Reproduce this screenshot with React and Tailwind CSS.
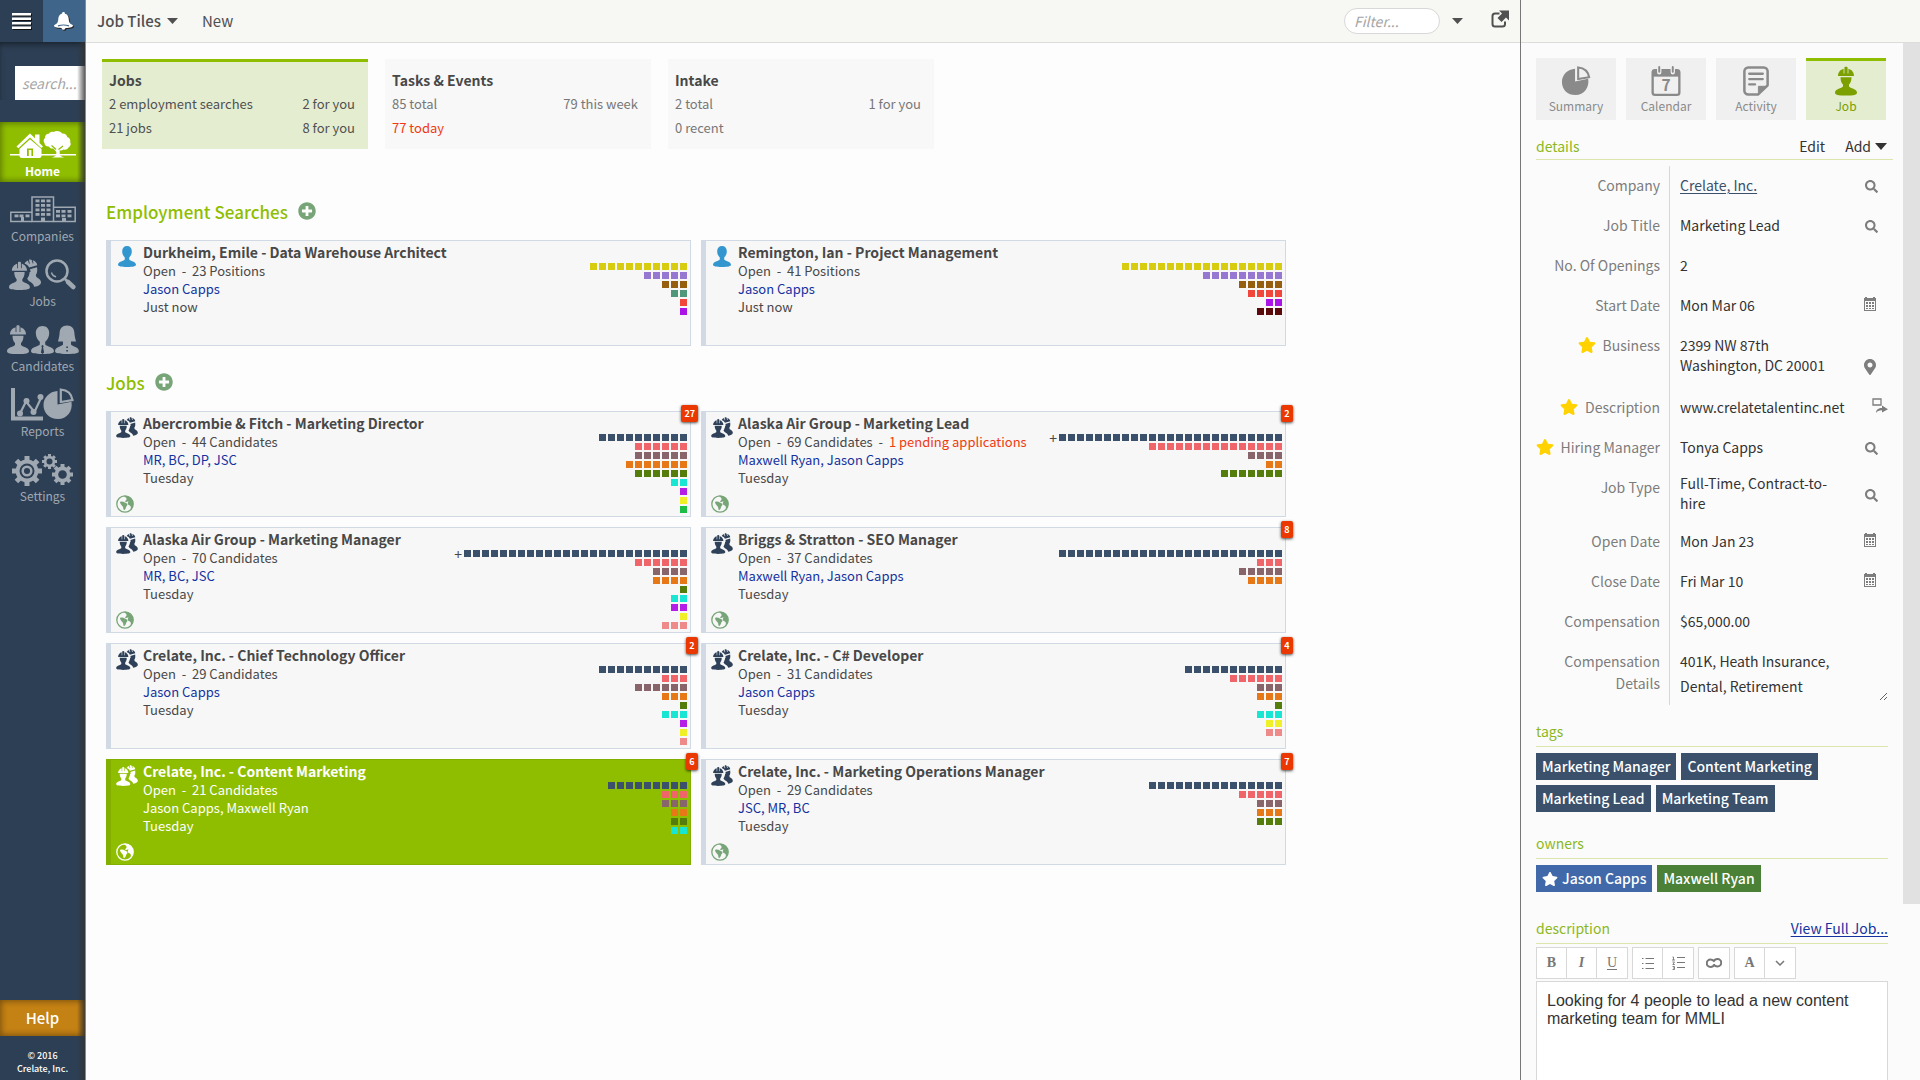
import { useState } from 'react';
import { FaMapMarkerAlt, FaPlusCircle, FaSearch, FaStar } from 'react-icons/fa';

// Pipeline stage colors
const NAVY = 'bg-[#3a506b]';
const CORAL = 'bg-[#f0656a]';
const MAUVE = 'bg-[#87656a]';
const ORANGE = 'bg-[#e67817]';
const OLIVE = 'bg-[#547d0b]';
const CYAN = 'bg-[#19e6d2]';
const PURPLE = 'bg-[#b41ee6]';
const YELLOW = 'bg-[#f0f028]';
const GREEN = 'bg-[#1ebe46]';
const PINK = 'bg-[#ee8a8a]';

const searches = [
  {
    title: 'Durkheim, Emile - Data Warehouse Architect',
    count: '23 Positions',
    owners: 'Jason Capps',
    updated: 'Just now',
    stages: [
      ['bg-[#d8cc10]', 11],
      ['bg-[#9678d2]', 5],
      ['bg-[#965f0f]', 3],
      ['bg-[#509678]', 2],
      ['bg-[#f0463c]', 1],
      ['bg-[#aa14e6]', 1],
    ],
  },
  {
    title: 'Remington, Ian - Project Management',
    count: '41 Positions',
    owners: 'Jason Capps',
    updated: 'Just now',
    stages: [
      ['bg-[#d8cc10]', 18],
      ['bg-[#9678d2]', 9],
      ['bg-[#965f0f]', 5],
      ['bg-[#f0463c]', 4],
      ['bg-[#aa14e6]', 2],
      ['bg-[#5a0a0a]', 3],
    ],
  },
];

const jobs = [
  {
    title: 'Abercrombie & Fitch - Marketing Director',
    count: '44 Candidates',
    owners: 'MR, BC, DP, JSC',
    updated: 'Tuesday',
    badge: 27,
    published: true,
    stages: [[NAVY, 10], [CORAL, 6], [MAUVE, 6], [ORANGE, 7], [OLIVE, 6], [CYAN, 2], [PURPLE, 1], [YELLOW, 1], [GREEN, 1]],
  },
  {
    title: 'Alaska Air Group - Marketing Lead',
    count: '69 Candidates',
    pending: '1 pending applications',
    owners: 'Maxwell Ryan, Jason Capps',
    updated: 'Tuesday',
    badge: 2,
    published: true,
    more: true,
    stages: [[NAVY, 25], [CORAL, 15], [MAUVE, 4], [ORANGE, 2], [OLIVE, 7]],
  },
  {
    title: 'Alaska Air Group - Marketing Manager',
    count: '70 Candidates',
    owners: 'MR, BC, JSC',
    updated: 'Tuesday',
    published: true,
    more: true,
    stages: [[NAVY, 25], [CORAL, 6], [MAUVE, 4], [ORANGE, 4], [OLIVE, 1], [CYAN, 2], [PURPLE, 2], [YELLOW, 1], [PINK, 3]],
  },
  {
    title: 'Briggs & Stratton - SEO Manager',
    count: '37 Candidates',
    owners: 'Maxwell Ryan, Jason Capps',
    updated: 'Tuesday',
    badge: 8,
    published: true,
    stages: [[NAVY, 25], [CORAL, 3], [MAUVE, 5], [ORANGE, 4]],
  },
  {
    title: 'Crelate, Inc. - Chief Technology Officer',
    count: '29 Candidates',
    owners: 'Jason Capps',
    updated: 'Tuesday',
    badge: 2,
    stages: [[NAVY, 10], [CORAL, 3], [MAUVE, 6], [ORANGE, 3], [OLIVE, 1], [CYAN, 3], [PURPLE, 1], [YELLOW, 1], [PINK, 1]],
  },
  {
    title: 'Crelate, Inc. - C# Developer',
    count: '31 Candidates',
    owners: 'Jason Capps',
    updated: 'Tuesday',
    badge: 4,
    stages: [[NAVY, 11], [CORAL, 6], [MAUVE, 3], [ORANGE, 3], [OLIVE, 1], [CYAN, 3], [YELLOW, 2], [PINK, 2]],
  },
  {
    title: 'Crelate, Inc. - Content Marketing',
    count: '21 Candidates',
    owners: 'Jason Capps, Maxwell Ryan',
    updated: 'Tuesday',
    badge: 6,
    published: true,
    stages: [[NAVY, 9], [CORAL, 3], [MAUVE, 3], [ORANGE, 2], [OLIVE, 2], [CYAN, 2]],
  },
  {
    title: 'Crelate, Inc. - Marketing Operations Manager',
    count: '29 Candidates',
    owners: 'JSC, MR, BC',
    updated: 'Tuesday',
    badge: 7,
    published: true,
    stages: [[NAVY, 15], [CORAL, 5], [MAUVE, 3], [ORANGE, 3], [OLIVE, 3]],
  },
];

const summaries = [
  { title: 'Jobs', rows: [['2 employment searches', '2 for you'], ['21 jobs', '8 for you']] },
  { title: 'Tasks & Events', rows: [['85 total', '79 this week'], ['77 today', '']] },
  { title: 'Intake', rows: [['2 total', '1 for you'], ['0 recent', '']] },
];

/* ---------- Icons ---------- */

const HELMET = 'M3 9.5C3 5.5 5.5 3 8.6 2.2V7h.8V1.4C9.4.6 10 .3 11 .3s1.6.3 1.6 1.1V7h.8V2.2C16.5 3 19 5.5 19 9.5Z';
const BODY =
  'M5.5 10.800h11c0 4-1.300 6-2.500 7.200v2c1 1.800 8 2.200 8 6.200 0 2-3 2.800-11 2.800s-11-.8-11-2.800c0-4 7-4.400 8-6.200v-2c-1.200-1.200-2.500-3.200-2.500-7.200Z';

const Worker = ({ className }) => (
  <svg viewBox="0 0 22 29" fill="currentColor" className={className}>
    <path d={HELMET} />
    <path d={BODY} />
  </svg>
);

const Workers = ({ className }) => (
  <svg viewBox="0 0 32 31" fill="currentColor" className={className}>
    <path d="M15.5 4.500c.8-1.500 2-2.600 3.500-3.100l1 3.300.8-.2-.9-3.700c1-.6 2.200-.4 2.800.3l1 3.500.8-.3-.8-3C26.500 2 28 4 28.200 6.300L20.300 8.600C19.200 6.600 17.500 5.200 15.500 4.500Z" />
    <path d="M21 10.300 28 8.300c.6 3.200.2 6-1.200 7.700l.6 2c1.600 1.200 4.600 2.300 4.600 5.400 0 1.800-2.200 3.600-6.800 4.400-.6-3-3-4.600-5.400-5.800l-1.600-2.200c1.600-2.400 2.300-4.400 2.400-6.800h1Z" />
    <g transform="translate(0 2.500) scale(.95 .98)">
      <path d={HELMET} />
      <path d={BODY} />
    </g>
  </svg>
);

const Person = ({ className }) => (
  <svg viewBox="0 0 18 21" fill="currentColor" className={className}>
    <path d="M9 0c3 0 4.800 2 4.800 5.200 0 2.800-1.200 5-2.600 6.300v2C12 15 18 15.500 18 18.800c0 1.500-3 2.200-9 2.200s-9-.7-9-2.200C0 15.500 6 15 6.800 13.500v-2C5.400 10.200 4.200 8 4.200 5.200 4.200 2 6 0 9 0Z" />
  </svg>
);

const Bell = () => (
  <svg viewBox="0 0 19 18" fill="currentColor" className="h-[18px] w-[19px] drop-shadow-[1px_1px_0_#222]">
    <path d="M9.500 0c.9 0 1.400.6 1.400 1.400 2.400.7 3.700 2.600 3.800 5.300.1 3 .8 4.800 3.500 6 .5.300.8.700.8 1.100 0 1.600-4 2.400-9.500 2.400S0 15.400 0 13.800c0-.4.3-.8.8-1.100 2.700-1.200 3.400-3 3.500-6 .1-2.700 1.400-4.600 3.800-5.300C8.100.6 8.600 0 9.500 0Z" />
    <path d="M4 13.800c3.500-1 7.500-1 11 0" fill="none" stroke="#3f658a" strokeWidth="1.200" />
    <circle cx="9.500" cy="15.800" r="2" />
  </svg>
);

const Globe = ({ className }) => (
  <svg viewBox="0 0 18 18" className={className}>
    <circle cx="9" cy="9" r="8.200" fill="none" stroke="currentColor" strokeWidth="1.300" />
    <path
      d="M8 .8c4.500-.6 9 2.700 9.200 7.700.1 2.500-.8 4.700-2.300 6.200-.5-1.200.3-2-.2-3.200-.5-1.200-2-1-2.700-2.200-.5-1-.2-2 .6-2.600-.8-.4-1.700-.2-2.300.4l-1.600-.5C9.400 5.600 11 5 10.500 3.500 10.200 2.600 8.700 2.200 8 .8Z"
      fill="currentColor"
    />
    <path
      d="M4 7c1.600-.8 3.600-.4 4.800.6.8.6 2.300.6 2.600 1.600.3 1.100-1 1.700-1.300 2.800-.3 1.200-.8 2.600-2 3.200-.9-.6-.7-2-1-3-.3-1-1.400-1.500-1.900-2.400C4.800 9 4 8.200 4 7Z"
      fill="currentColor"
    />
  </svg>
);

const HomeIcon = () => (
  <svg viewBox="0 0 66 28" fill="currentColor" className="h-7 w-[66px]">
    <path d="M0 23h66v1.500H0z" />
    <path d="M6.500 15.500 20 2.500l5 4.800V3.500h4.500V12l3.500 3.500-1.800 1.600L20 6.400 8.300 17.200Z" />
    <path d="M20 8.300 9.500 18v6.500c0 1.500.8 2.500 2 2.500h18c1.200 0 2-1 2-2.500V18Z" />
    <path d="M17 17.500h6V25h-6z" fill="#8fbe00" />
    <path d="M18.800 19h2.600v6h-2.600z" />
    <path d="M47 0c2.500 0 4.300 1 5 2.500 3-.3 5 1.300 5.200 3.500 2.500.8 3.600 2.800 3 5 1 2 .5 4.300-1.500 5.300-.8 2-3.200 3-5.200 2.200-1 .9-2.500 1.200-3.800.8v4.200c.5 1.300 2 2.200 4.800 3H41.500c2.800-.8 4.300-1.700 4.800-3v-2.800l-3-3.200c-2 .3-3.800-.5-4.500-2-2.500.2-4.300-1.200-4.300-3.500-1.300-1.500-1-3.800.5-5-.2-2.500 1.500-4.300 3.800-4.200C40 1 42.300.5 43.700 1 44.600.4 45.700 0 47 0Z" />
    <path d="m41.500 14.500 4.500 4M53 15l-4.500 3.500" fill="none" stroke="#8fbe00" strokeWidth="1.200" />
  </svg>
);

const CompaniesIcon = () => {
  const windows = [];
  [25.5, 31, 36.5].forEach((x) => [3.5, 8, 12.5, 17].forEach((y) => windows.push([x, y])));
  [4.5, 9.5, 15.5].forEach((x) => windows.push([x, 18.5]));
  [46, 51.5, 57.5].forEach((x) => [14, 18.5].forEach((y) => windows.push([x, y])));
  return (
    <svg viewBox="0 0 66 28" className="h-7 w-[66px]">
      <g fill="none" stroke="currentColor" strokeWidth="1.500">
        <path d="M22 25.500H.8V16.200H22" />
        <path d="M22 25.500V1h21.500v24.500Z" />
        <path d="M43.500 11.200h21.700v14.300H43.500" />
      </g>
      {windows.map(([x, y]) => (
        <rect key={`${x}-${y}`} x={x} y={y} width="4" height="2.800" fill="currentColor" />
      ))}
      <path d="M11 21h3v4h-3zM31 21.500h4V25h-4zM52 22h4v3.500h-4z" fill="currentColor" />
    </svg>
  );
};

const JobsIcon = () => (
  <div className="flex items-start gap-1">
    <Workers className="h-[31px] w-8" />
    <svg viewBox="0 0 31 31" className="h-[31px] w-[31px]" fill="none" stroke="currentColor">
      <circle cx="12" cy="12" r="10.500" strokeWidth="2.500" />
      <path d="M6.500 13.500c.6 2.300 2.200 3.800 4.600 4.200" strokeWidth="1.500" />
      <path d="m20 20 2.500 2.500" strokeWidth="2.500" />
      <path d="m23 23 5.300 5" strokeWidth="4.500" strokeLinecap="round" />
    </svg>
  </div>
);

const CandidatesIcon = () => (
  <svg viewBox="0 0 72 30" fill="currentColor" className="h-[30px] w-[72px]">
    <path d={HELMET} />
    <path d={BODY} />
    <path d="M35.500 1c4 0 6.700 2.800 6.700 7 0 3.800-1.800 7-4 8.800V19.500c1.500 2 8.800 2.500 8.800 6.500 0 2.200-3.500 3-11.500 3S24 28.200 24 26c0-4 7.300-4.500 8.800-6.500v-2.700c-2.200-1.800-4-5-4-8.800 0-4.200 2.700-7 6.700-7Z" />
    <path d="M60 .5c4.800 0 7 2.800 7.400 7.500.2 3.200.8 5.500 1.600 8.500h-5v3c1.300 2 8 2.500 8 6.500 0 2.200-3.500 3-12 3s-12-.8-12-3c0-4 6.700-4.500 8-6.500v-3h-5c.8-3 1.400-5.300 1.600-8.500C53 3.300 55.200.5 60 .5Z" />
    <path d="m34.300 21 1.200-1 1.200 1-.6 1.500 1 5-1.600 1.500-1.600-1.500 1-5ZM59.300 21.500h1.600v1.600h-1.600zM59.300 25h1.600v1.600h-1.600z" fill="#2d3f54" />
  </svg>
);

const PiePaths = () => (
  <>
    <path d="M15 3v13.500l14-2.800c1.500 9.500-4.500 17.300-13.500 17.300C7 31 1 25 1 17 1 9.500 7 3.500 15 3Z" />
    <path d="M18.300 1.500c6.500.6 10.800 4.600 11.700 10.500l-11.700 2Z" fill="none" stroke="currentColor" strokeWidth="2.200" />
  </>
);

const ReportsIcon = () => (
  <svg viewBox="0 0 63 33" fill="currentColor" className="h-[33px] w-[63px]">
    <path d="M0 0h4v28.500h28V32.500H0z" />
    <path d="m9 25.500 6-12 8.500 10.500 6.500-14" fill="none" stroke="currentColor" strokeWidth="2.200" />
    <circle cx="9" cy="25.500" r="3" />
    <circle cx="15.500" cy="13" r="3" />
    <circle cx="22.500" cy="24" r="3" />
    <circle cx="29.500" cy="9" r="3" />
    <g transform="translate(31.500 0)">
      <PiePaths />
    </g>
  </svg>
);

const Gear = ({ cx, cy, r, tooth, hole }) => (
  <g>
    {[0, 45, 90, 135].map((angle) => (
      <rect
        key={angle}
        x={cx - tooth / 2}
        y={cy - r}
        width={tooth}
        height={r * 2}
        transform={`rotate(${angle} ${cx} ${cy})`}
        fill="currentColor"
      />
    ))}
    <circle cx={cx} cy={cy} r={r * 0.76} fill="currentColor" />
    <circle cx={cx} cy={cy} r={hole} fill="#2d3f54" />
  </g>
);

const SettingsIcon = () => (
  <svg viewBox="0 0 62 32" className="h-8 w-[62px]">
    <Gear cx={15} cy={17} r={15} tooth={5} hole={7.5} />
    <circle cx="15" cy="17" r="4.300" fill="none" stroke="currentColor" strokeWidth="2.500" />
    <Gear cx={37.5} cy={7.5} r={7.5} tooth={3} hole={3} />
    <Gear cx={50.5} cy={20.5} r={10.5} tooth={4} hole={4.3} />
  </svg>
);

const CalendarGrid = () => (
  <svg viewBox="0 0 12 14" className="h-3.5 w-3" fill="currentColor">
    <path d="M0 1h1V0h2v1h6V0h2v1h1v13H0Zm1 3v9h10V4Z" fillRule="evenodd" />
    {[2, 5, 8].map((x) => [5, 8, 11].map((y) => <rect key={`${x}-${y}`} x={x} y={y} width="2" height={y === 11 ? 1 : 2} />))}
  </svg>
);

const ShareIcon = () => (
  <svg viewBox="0 0 16 16" className="size-4" fill="none" stroke="currentColor">
    <path d="M1 1h8v6H1z" strokeWidth="1.300" />
    <path d="M4 15c0-3.500 2.500-5 6-5V7.500l6 3.700-6 3.300v-2.300c-3 0-5 .8-6 2.800Z" fill="currentColor" stroke="none" />
  </svg>
);

/* ---------- Sidebar ---------- */

const navItems = [
  { label: 'Home', Icon: HomeIcon },
  { label: 'Companies', Icon: CompaniesIcon },
  { label: 'Jobs', Icon: JobsIcon },
  { label: 'Candidates', Icon: CandidatesIcon },
  { label: 'Reports', Icon: ReportsIcon },
  { label: 'Settings', Icon: SettingsIcon },
];

const Sidebar = () => (
  <aside className="relative flex w-[85px] shrink-0 flex-col overflow-hidden bg-[#2d3f54]">
    <div className="flex h-[42px] shrink-0 text-white">
      <button className="flex flex-1 items-center justify-center" aria-label="Menu">
        <svg viewBox="0 0 19 16" className="h-4 w-[19px] drop-shadow-[1px_1px_0_#111]" fill="currentColor">
          <path d="M0 0h19v2.500H0zM0 4.500h19V7H0zM0 9h19v2.500H0zM0 13.500h19V16H0z" />
        </svg>
      </button>
      <button className="flex flex-1 items-center justify-center bg-[#3f658a]" aria-label="Notifications">
        <Bell />
      </button>
    </div>
    <div className="pt-6 pl-[15px] shadow-[inset_0_4px_6px_-2px_rgba(0,0,0,0.5)]">
      <input
        type="text"
        placeholder="search..."
        aria-label="Search"
        className="h-[34px] w-full bg-white pl-[7px] text-sm italic outline-none placeholder:text-[#a5a5a5]"
      />
    </div>
    <nav className="mt-[22px] flex flex-col gap-[5px]">
      {navItems.map(({ label, Icon }, index) => (
        <a
          key={label}
          href="#"
          className={
            index === 0
              ? 'flex h-[60px] flex-col items-center bg-[#8fbe00] text-xs font-bold text-white shadow-[inset_0_0_6px_1px_rgba(0,0,0,0.4)]'
              : 'flex h-[60px] flex-col items-center text-xs text-[#a0a8b2]'
          }
        >
          <span className="flex h-[41px] items-center pt-1">
            <Icon />
          </span>
          <span className="leading-4">{label}</span>
        </a>
      ))}
    </nav>
    <div className="mt-auto">
      <button className="h-9 w-full bg-[#c48114] text-[15px] font-medium text-white shadow-[inset_0_0_6px_1px_rgba(0,0,0,0.4)]">
        Help
      </button>
      <p className="pt-[13px] pb-[5px] text-center text-[9px] leading-[13px] font-medium text-white">
        © 2016
        <br />
        Crelate, Inc.
      </p>
    </div>
    <div className="pointer-events-none absolute top-[42px] right-0 bottom-0 w-2 bg-linear-to-r from-transparent to-[#333]/80" />
  </aside>
);

/* ---------- Main area ---------- */

const SummaryTile = ({ title, rows, active }) => (
  <button
    className={
      active
        ? 'flex h-[90px] w-[266px] flex-col justify-start border-t-3 border-[#8fbe00] bg-[#e4edd0] pt-[6px] pr-[13px] pl-[7px] text-left text-[13px] text-[#505050]'
        : 'flex h-[90px] w-[266px] flex-col justify-start border-t-3 border-[#f8f8f8] bg-[#f8f8f8] pt-[6px] pr-[13px] pl-[7px] text-left text-[13px] text-[#777]'
    }
  >
    <span className="text-sm leading-6 font-bold text-[#484848]">{title}</span>
    {rows.map(([left, right]) => (
      <span key={left} className="flex w-full justify-between leading-6">
        <span className={left === '77 today' ? 'text-[#f03a10]' : ''}>{left}</span>
        <span>{right}</span>
      </span>
    ))}
  </button>
);

const JobCard = ({ job, search, selected, onSelect }) => (
  <article
    onClick={onSelect}
    className={
      selected
        ? 'relative flex h-[106px] border border-l-[5px] border-[#83b000] bg-[#8fbe00] text-white'
        : 'relative flex h-[106px] border border-l-[5px] border-[#d1d9e5] bg-[#f7f7f7] text-[#484848]'
    }
  >
    <div className="flex w-8 shrink-0 flex-col justify-between pt-[5px] pb-[3px] pl-[5px]">
      {search ? (
        <Person className="ml-0.5 h-[21px] w-[18px] text-[#3496cf]" />
      ) : (
        <Workers className={selected ? 'h-[21px] w-[22px] text-white' : 'h-[21px] w-[22px] text-[#2f4159]'} />
      )}
      {job.published && <Globe className={selected ? 'size-[18px] text-white' : 'size-[18px] text-[#78a578]'} />}
    </div>
    <div className="min-w-0 flex-1 pt-px text-[13px] leading-[18px]">
      <h3 className={selected ? 'text-sm leading-5 font-bold' : 'text-sm leading-5 font-bold text-[#484848]'}>{job.title}</h3>
      <p>
        Open&nbsp; - &nbsp;{job.count}
        {job.pending && (
          <>
            &nbsp; - &nbsp;<span className="text-[#f03a10]">{job.pending}</span>
          </>
        )}
      </p>
      <p className={selected ? '' : 'text-[#1432a0]'}>{job.owners}</p>
      <p>{job.updated}</p>
    </div>
    <div className="flex flex-col items-end gap-0.5 pt-[22px] pr-[3px]">
      {job.stages.map(([color, count], index) => (
        <div key={color} className="flex h-[7px] items-center gap-0.5">
          {index === 0 && job.more && <span className="text-sm leading-none">+</span>}
          {Array.from({ length: count }, (_, i) => (
            <span key={i} className={`size-[7px] ${color}`} />
          ))}
        </div>
      ))}
    </div>
    {job.badge && (
      <span className="absolute -top-[7px] -right-2 flex h-[17px] min-w-3 items-center justify-center rounded-xs bg-[#eb3700] px-[3px] text-[9px] leading-none font-bold text-white shadow-[0_1px_3px_rgba(0,0,0,0.7)]">
        {job.badge}
      </span>
    )}
  </article>
);

const Section = ({ title, children }) => (
  <section>
    <div className="flex h-[26px] items-center gap-[10px]">
      <h2 className="text-[17px] font-medium text-[#8fbe00]">{title}</h2>
      <button aria-label={`Add to ${title}`} className="mb-[3px]">
        <FaPlusCircle className="size-[18px] text-[#78a578]" />
      </button>
    </div>
    <div className="mt-[15px] grid grid-cols-2 gap-[10px]">{children}</div>
  </section>
);

/* ---------- Detail panel ---------- */

const tabs = [
  {
    label: 'Summary',
    icon: (
      <svg viewBox="0 0 32 32" fill="currentColor" className="size-[30px]">
        <PiePaths />
      </svg>
    ),
  },
  {
    label: 'Calendar',
    icon: (
      <svg viewBox="0 0 30 31" className="size-[30px]">
        <rect x="1.200" y="4.200" width="27.600" height="25.600" rx="2.500" fill="none" stroke="currentColor" strokeWidth="2.400" />
        <path d="M1 4h28v7H1z" fill="currentColor" />
        <path d="M8 1v5.500M22 1v5.500" stroke="#f0f0f0" strokeWidth="4.500" strokeLinecap="round" />
        <path d="M8 1v5M22 1v5" stroke="currentColor" strokeWidth="2" strokeLinecap="round" />
        <text x="15" y="26" textAnchor="middle" fontSize="16" fontWeight="700" fill="currentColor">
          7
        </text>
      </svg>
    ),
  },
  {
    label: 'Activity',
    icon: (
      <svg viewBox="0 0 28 31" className="h-[30px] w-7" fill="none" stroke="currentColor" strokeWidth="2.600">
        <path d="M16 29.500H6A4 4 0 0 1 2 25.500V5.500a4 4 0 0 1 4-4h16a4 4 0 0 1 4 4V20Z" strokeLinejoin="round" />
        <path d="M16.500 29V21H26Z" fill="currentColor" strokeWidth="1" />
        <path d="M7 8h14M7 13.500h14M7 19h6" strokeLinecap="round" strokeWidth="2.400" />
      </svg>
    ),
  },
  { label: 'Job', icon: <Worker className="h-[30px] w-[22px]" /> },
];

const fields = [
  { label: 'Company', value: 'Crelate, Inc.', href: '#', icon: 'search' },
  { label: 'Job Title', value: 'Marketing Lead', icon: 'search' },
  { label: 'No. Of Openings', value: '2' },
  { label: 'Start Date', value: 'Mon Mar 06', icon: 'calendar' },
  { label: 'Business', value: '2399 NW 87th\nWashington, DC 20001', icon: 'pin', starred: true },
  { label: 'Description', value: 'www.crelatetalentinc.net', icon: 'share', starred: true },
  { label: 'Hiring Manager', value: 'Tonya Capps', icon: 'search', starred: true },
  { label: 'Job Type', value: 'Full-Time, Contract-to-hire', icon: 'search' },
  { label: 'Open Date', value: 'Mon Jan 23', icon: 'calendar' },
  { label: 'Close Date', value: 'Fri Mar 10', icon: 'calendar' },
  { label: 'Compensation', value: '$65,000.00' },
];

const rowClass = {
  Business: 'flex h-[62px]',
  'Job Type': 'flex h-[54px]',
};

const iconClass = {
  search: 'flex flex-1 items-center justify-center text-[#7d7d7d]',
  calendar: 'flex flex-1 items-center justify-center pr-1 pb-1 text-[#7d7d7d]',
  pin: 'flex flex-1 items-end justify-center pr-1 pb-[13px] text-[#7d7d7d]',
  share: 'flex flex-1 items-center justify-end pr-[5px] pb-1 text-[#7d7d7d]',
};

const FieldIcon = ({ type }) => {
  if (type === 'search') return <FaSearch className="size-[13px]" />;
  if (type === 'calendar') return <CalendarGrid />;
  if (type === 'pin') return <FaMapMarkerAlt className="size-4" />;
  return <ShareIcon />;
};

const Field = ({ field }) => (
  <div className={rowClass[field.label] || 'flex h-10'}>
    <dt className="flex w-[133px] shrink-0 justify-end gap-[7px] pt-2 pr-[9px] leading-[22px] whitespace-nowrap text-[#7d7d7d]">
      {field.starred && <FaStar className="mt-0.5 size-[18px] shrink-0 text-[#ffd200]" />}
      {field.label}
    </dt>
    <dd className="flex min-w-0 flex-1 border-l border-[#d8d8d8] pl-[10px] text-[#333]">
      <span
        className={
          field.label === 'Job Type'
            ? 'w-[170px] shrink-0 pt-[5px] leading-5 whitespace-pre-line'
            : 'w-[170px] shrink-0 pt-[9px] leading-5 whitespace-pre-line'
        }
      >
        {field.href ? (
          <a href={field.href} className="text-[#3a506b] underline underline-offset-2">
            {field.value}
          </a>
        ) : (
          field.value
        )}
      </span>
      {field.icon && (
        <button aria-label={`${field.label} ${field.icon}`} className={iconClass[field.icon]}>
          <FieldIcon type={field.icon} />
        </button>
      )}
    </dd>
  </div>
);

const toolbarGroups = [
  [
    { name: 'Bold', icon: <b>B</b> },
    { name: 'Italic', icon: <i className="font-bold">I</i> },
    { name: 'Underline', icon: <u className="underline-offset-2">U</u> },
  ],
  [
    {
      name: 'Bullets',
      icon: (
        <svg viewBox="0 0 12 12" className="size-3" fill="none" stroke="currentColor">
          <path d="M0 1.500h1.500M3.500 1.500H12M0 6.500h1.500M3.500 6.500H12M0 11.500h1.500M3.500 11.500H12" />
        </svg>
      ),
    },
    {
      name: 'Numbering',
      icon: (
        <svg viewBox="0 0 13 14" className="h-3.5 w-[13px]" fill="none" stroke="currentColor">
          <path d="M5 1.500h8M5 6.500h8M5 11.500h8" />
          <path d="M.5 1h1v3M0 4h3M.5 6h2L.8 8.500h2M.5 10.500h2v3h-2M1 12h1.500" strokeWidth=".9" />
        </svg>
      ),
    },
  ],
  [
    {
      name: 'Link',
      icon: (
        <svg viewBox="0 0 16 10" className="h-2.5 w-4" fill="none" stroke="currentColor" strokeWidth="2">
          <path d="M8.500 6.500C7.500 8.500 6 9 4.500 9a3.700 3.700 0 0 1 0-7.500c1.800 0 3 .7 4 2.300M7.500 3.500C8.500 1.500 10 1 11.500 1a3.700 3.700 0 0 1 0 7.500c-1.800 0-3-.7-4-2.300" />
        </svg>
      ),
    },
  ],
  [
    { name: 'Font', icon: <b>A</b> },
    {
      name: 'More fonts',
      icon: (
        <svg viewBox="0 0 10 6" className="h-1.5 w-2.5" fill="none" stroke="currentColor" strokeWidth="1.500">
          <path d="m1 1 4 4 4-4" />
        </svg>
      ),
    },
  ],
];

const PanelHeading = ({ children }) => (
  <h2 className="mr-[15px] border-b border-[#dbe6ac] pb-[3px] text-sm leading-6 text-[#8cb81e]">{children}</h2>
);

const DetailPanel = () => {
  const [compensation, setCompensation] = useState('401K, Heath Insurance, Dental, Retirement');
  const [description, setDescription] = useState('Looking for 4 people to lead a new content marketing team for MMLI');

  return (
    <aside className="flex w-[400px] shrink-0 flex-col overflow-hidden border-l border-[#777] bg-[#fbfbfb]">
      <div className="h-[43px] shrink-0 border-b border-[#dcdcdc] bg-[#f7f7f3]" />
      <div className="flex min-h-0 flex-1">
        <div className="flex min-w-0 flex-1 flex-col overflow-hidden pt-[15px] pl-[15px] text-sm">
          <div className="flex gap-[10px]">
            {tabs.map((tab) => (
              <button
                key={tab.label}
                className={
                  tab.label === 'Job'
                    ? 'flex h-[62px] w-20 flex-col items-center border-t-3 border-[#8fbe00] bg-[#e4edd0] pt-[5px] text-xs leading-5 text-[#7ba000]'
                    : 'flex h-[62px] w-20 flex-col items-center bg-[#f0f0f0] pt-2 text-xs leading-5 text-[#8a8a8a]'
                }
              >
                {tab.icon}
                {tab.label}
              </button>
            ))}
          </div>

          <div className="mt-[14px] mr-[10px] flex border-b border-[#dbe6ac] pb-px leading-6">
            <h2 className="flex-1 text-[#8cb81e]">details</h2>
            <button className="mr-5 text-[#333]">Edit</button>
            <button className="mr-[6px] flex items-center gap-1 text-[#333]">
              Add
              <svg viewBox="0 0 12 7" className="h-[7px] w-3" fill="currentColor">
                <path d="M0 0h12L6 7z" />
              </svg>
            </button>
          </div>

          <dl className="mt-[6px] mr-[10px]">
            {fields.map((field) => (
              <Field key={field.label} field={field} />
            ))}
            <div className="flex h-[63px]">
              <dt className="w-[133px] shrink-0 pt-2 pr-[9px] text-right leading-[22px] text-[#7d7d7d]">
                <label htmlFor="compensation-details">Compensation Details</label>
              </dt>
              <dd className="flex flex-1 border-l border-[#d8d8d8] pt-[7px] pr-[5px] pl-[10px]">
                <textarea
                  id="compensation-details"
                  value={compensation}
                  onChange={(e) => setCompensation(e.target.value)}
                  className="h-[52px] w-full overflow-hidden bg-transparent pr-8 leading-[25px] text-[#333] outline-none"
                />
              </dd>
            </div>
          </dl>

          <div className="mt-[14px]">
            <PanelHeading>tags</PanelHeading>
            <div className="mt-[6px] flex flex-wrap gap-[5px] font-medium text-white">
              {['Marketing Manager', 'Content Marketing', 'Marketing Lead', 'Marketing Team'].map((tag) => (
                <span key={tag} className="h-[27px] bg-[#3a506b] px-[6px] leading-[27px]">
                  {tag}
                </span>
              ))}
            </div>
          </div>

          <div className="mt-[19px]">
            <PanelHeading>owners</PanelHeading>
            <div className="mt-[6px] flex gap-[5px] font-medium text-white">
              <span className="flex h-[27px] items-center gap-1 bg-[#4169aa] px-[6px] leading-[27px]">
                <FaStar className="size-4" />
                Jason Capps
              </span>
              <span className="h-[27px] bg-[#4b8037] px-[6px] leading-[27px]">Maxwell Ryan</span>
            </div>
          </div>

          <div className="mt-6 mr-[15px] flex border-b border-[#dbe6ac] pb-[3px] leading-6">
            <h2 className="flex-1 text-[#8cb81e]">description</h2>
            <a href="#" className="text-[#1432a0] underline underline-offset-2">
              View Full Job...
            </a>
          </div>
          <div className="mt-[3px] flex gap-1 font-['Liberation_Serif',serif] text-[#777]">
            {toolbarGroups.map((group) => (
              <div key={group[0].name} className="flex divide-x divide-[#d8d8d8] border border-[#d8d8d8] bg-white">
                {group.map((tool) => (
                  <button key={tool.name} aria-label={tool.name} className="flex h-[30px] w-[30px] items-center justify-center">
                    {tool.icon}
                  </button>
                ))}
              </div>
            ))}
          </div>
          <textarea
            aria-label="Description"
            value={description}
            onChange={(e) => setDescription(e.target.value)}
            className="mt-[2px] mr-[15px] min-h-[97px] flex-1 resize-none border border-b-0 border-[#d8d8d8] bg-white px-[10px] pt-[10px] font-['Liberation_Sans',sans-serif] text-base leading-[18px] text-[#333] outline-none"
          />
        </div>
        <div className="w-[17px] shrink-0">
          <div className="h-[83%] bg-[#e1e1e1]" />
        </div>
      </div>
    </aside>
  );
};

const App = () => {
  const [selectedJob, setSelectedJob] = useState('Crelate, Inc. - Content Marketing');
  const [filter, setFilter] = useState('');

  return (
    <div className="flex h-screen overflow-hidden bg-[#fdfdfd] font-['Noto_Sans_CJK_SC',sans-serif]">
      <Sidebar />

      <main className="flex min-w-0 flex-1 flex-col border-l border-[#8a8a8a]">
        <header className="flex h-[43px] shrink-0 items-center border-b border-[#dcdcdc] bg-[#f7f7f3] px-[11px] text-[#505050]">
          <button className="flex items-center gap-1.5 text-[15px] font-medium">
            Job Tiles
            <svg viewBox="0 0 11 6" className="h-1.5 w-[11px]" fill="currentColor">
              <path d="M0 0h11L5.500 6z" />
            </svg>
          </button>
          <button className="ml-6 text-[15px]">New</button>
          <input
            type="text"
            placeholder="Filter..."
            aria-label="Filter"
            value={filter}
            onChange={(e) => setFilter(e.target.value)}
            className="ml-auto h-[26px] w-24 rounded-full border border-[#d8d8d8] bg-white pl-[9px] text-sm italic outline-none placeholder:text-[#a5a5a5]"
          />
          <button aria-label="Filter options" className="ml-3">
            <svg viewBox="0 0 11 6" className="h-1.5 w-[11px]" fill="currentColor">
              <path d="M0 0h11L5.500 6z" />
            </svg>
          </button>
          <button aria-label="Open in new window" className="ml-7">
            <svg viewBox="0 0 18 18" className="mb-1 size-[18px]">
              <path d="M8.500 3.500H4A2.500 2.500 0 0 0 1.500 6v8A2.500 2.500 0 0 0 4 16.500h7.500A2.500 2.500 0 0 0 14 14v-2.500" fill="none" stroke="currentColor" strokeWidth="2" />
              <path d="M8 .5h10v10l-3-3-4.500 4.500-4-4L11 3.500Z" fill="currentColor" />
            </svg>
          </button>
        </header>

        <div className="px-4 pt-4">
          <div className="flex gap-[17px]">
            {summaries.map((summary) => (
              <SummaryTile key={summary.title} {...summary} active={summary.title === 'Jobs'} />
            ))}
          </div>

          <div className="mt-[50px] ml-1 flex max-w-[1180px] flex-col gap-6">
            <Section title="Employment Searches">
              {searches.map((job) => (
                <JobCard key={job.title} job={job} search />
              ))}
            </Section>
            <Section title="Jobs">
              {jobs.map((job) => (
                <JobCard
                  key={job.title}
                  job={job}
                  selected={job.title === selectedJob}
                  onSelect={() => setSelectedJob(job.title)}
                />
              ))}
            </Section>
          </div>
        </div>
      </main>

      <DetailPanel />
    </div>
  );
};

export default App;
